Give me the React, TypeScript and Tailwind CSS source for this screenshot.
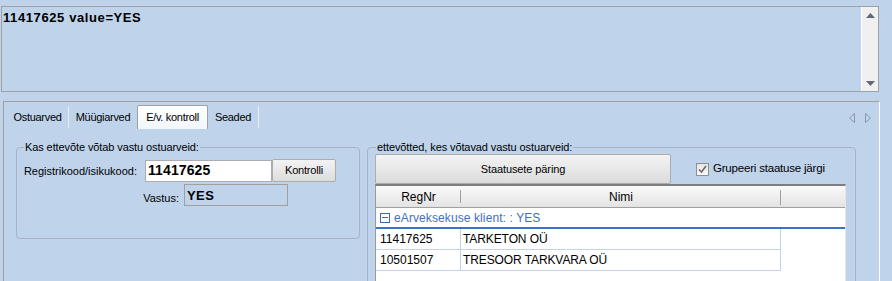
import React from "react";

const Tab = ({ label, w, sep = true }: { label: string; w: string; sep?: boolean }) => (
  <div className={`${w} h-[22px] flex items-center justify-center ${sep ? "border-r border-[#E6EDF6]" : ""} mb-[1px]`}>
    <span className="tracking-[-0.3px]">{label}</span>
  </div>
);

export default function App() {
  return (
    <div className="w-[892px] h-[281px] bg-[#BFD3EA] overflow-hidden font-['Liberation_Sans',Arial,sans-serif] text-[11px] text-black">
      <div className="pt-[6px] pl-[1px]">
        <div className="w-[878px] h-[86px] border border-[#A0A0A0] flex">
          <div className="flex-1 pl-[1px] pt-[3px] font-bold text-[13px] tracking-[0.6px] leading-[16px]">11417625 value=YES</div>
          <div className="w-[17px] bg-[#F0F0F0] border-l border-white flex flex-col justify-between items-center pt-[6px] pb-[5px]">
            <svg width="9" height="5" viewBox="0 0 9 5"><path d="M4.5 0 L9 5 L0 5 Z" fill="#606878" /></svg>
            <svg width="9" height="5" viewBox="0 0 9 5"><path d="M0 0 L9 0 L4.5 5 Z" fill="#606878" /></svg>
          </div>
        </div>
      </div>

      <div className="mt-[9px] ml-[3px] w-[877px] h-[200px] border-t border-l border-[#A0A0A0] border-r border-r-white">
        <div className="h-[27px] flex items-end pl-[3px]">
          <Tab label="Ostuarved" w="w-[62px]" />
          <Tab label="Müügiarved" w="w-[68px]" sep={false} />
          <div className="w-[71px] h-[24px] flex items-center justify-center bg-gradient-to-b from-white to-[#F2F6FA] border border-b-0 border-[#A0A0A0] rounded-t-[2px]">
            <span className="tracking-[-0.3px]">E/v. kontroll</span>
          </div>
          <Tab label="Seaded" w="w-[51px]" />
          <div className="ml-auto self-start mt-[11px] mr-[8px] flex gap-[10px]">
            <svg width="6" height="10" viewBox="0 0 6 10"><path d="M5.5 0.5 L0.5 5 L5.5 9.5 Z" fill="none" stroke="#8A96AA" strokeWidth="1" /></svg>
            <svg width="6" height="10" viewBox="0 0 6 10"><path d="M0.5 0.5 L5.5 5 L0.5 9.5 Z" fill="none" stroke="#8A96AA" strokeWidth="1" /></svg>
          </div>
        </div>

        <div className="pl-[12px] pt-[11px] flex gap-[7px] items-start">
          <fieldset className="w-[344px] h-[99px] border border-[#A8B2C2] rounded-[4px]">
            <legend className="ml-[7px] px-[1px] leading-[14px] tracking-[-0.1px]">Kas ettevõte võtab vastu ostuarveid:</legend>
            <div className="mt-[5px] flex items-center">
              <div className="w-[120px] text-right pt-[2px]">Registrikood/isikukood:</div>
              <div className="ml-[8px] w-[127px] h-[22px] bg-white border border-[#ABADB3] pl-[2px] flex items-center font-bold text-[14px] tracking-[0.1px]">11417625</div>
              <div className="w-[64px] h-[23px] bg-gradient-to-b from-[#F3F3F3] to-[#DCDCDC] border border-[#ACACAC] rounded-[2px] flex items-center justify-center tracking-[-0.2px]">Kontrolli</div>
            </div>
            <div className="mt-[2px] flex items-start">
              <div className="w-[162px] text-right pt-[6px]">Vastus:</div>
              <div className="ml-[5px] w-[104px] h-[22px] border border-[#A0A0A0] pl-[2px] pt-[4px] font-bold text-[13px] tracking-[0.4px] leading-[14px]">YES</div>
            </div>
          </fieldset>

          <fieldset className="w-[489px] h-[200px] border border-[#A8B2C2] rounded-[4px]">
            <legend className="ml-[8px] px-[1px] leading-[14px] tracking-[-0.1px]">ettevõtted, kes võtavad vastu ostuarveid:</legend>
            <div className="flex items-center pl-[7px]">
              <div className="w-[296px] h-[30px] bg-gradient-to-b from-[#F3F3F3] to-[#DCDCDC] border border-[#ACACAC] rounded-[2px] flex items-center justify-center tracking-[-0.1px]">Staatusete päring</div>
              <div className="ml-[25px] w-[13px] h-[13px] border border-[#8E8F8F] bg-gradient-to-b from-[#E6E6E6] to-[#FAFAFA] flex items-center justify-center mt-[1px]">
                <svg width="9" height="9" viewBox="0 0 9 9"><path d="M1 4.5 L3.5 7 L8 1" fill="none" stroke="#6A6A6A" strokeWidth="1.6" /></svg>
              </div>
              <div className="ml-[4px] tracking-[-0.2px] text-[11.5px]">Grupeeri staatuse järgi</div>
            </div>
            <div className="ml-[7px] w-[471px] h-[120px] bg-white border-l border-[#9A9A9A] border-t-2 border-t-[#7E7E7E] border-r border-r-[#E6E6E6] text-[12px]">
              <div className="h-[22px] flex bg-gradient-to-b from-[#FAFAFA] to-[#E3E3E3] border-b border-[#A0A0A0]">
                <div className="w-[85px] flex items-center justify-center relative">
                  RegNr
                  <div className="absolute right-0 top-[4px] h-[13px] w-px bg-[#A0A0A0]" />
                </div>
                <div className="w-[320px] flex items-center justify-center relative">
                  Nimi
                  <div className="absolute right-0 top-[4px] h-[15px] w-px bg-[#A0A0A0]" />
                </div>
                <div className="flex-1" />
              </div>
              <div className="h-[21px] flex items-center pl-[4px] border-b-2 border-[#3A72C4] text-[#3F70C0] tracking-[0.1px]">
                <div className="w-[10px] h-[10px] border border-[#3A6AB4] flex items-center justify-center mr-[4px]">
                  <div className="w-[6px] h-px bg-[#3A6AB4]" />
                </div>
                eArveksekuse klient: : YES
              </div>
              <div className="flex h-[21px]">
                <div className="w-[85px] border-r border-b border-[#C4D3E8] pl-[4px] flex items-center">11417625</div>
                <div className="w-[320px] border-r border-b border-[#C4D3E8] pl-[2px] flex items-center tracking-[-0.1px]">TARKETON OÜ</div>
              </div>
              <div className="flex h-[21px]">
                <div className="w-[85px] border-r border-b border-[#C4D3E8] pl-[4px] flex items-center">10501507</div>
                <div className="w-[320px] border-r border-b border-[#C4D3E8] pl-[2px] flex items-center tracking-[-0.1px]">TRESOOR TARKVARA OÜ</div>
              </div>
            </div>
          </fieldset>
        </div>
      </div>
    </div>
  );
}
